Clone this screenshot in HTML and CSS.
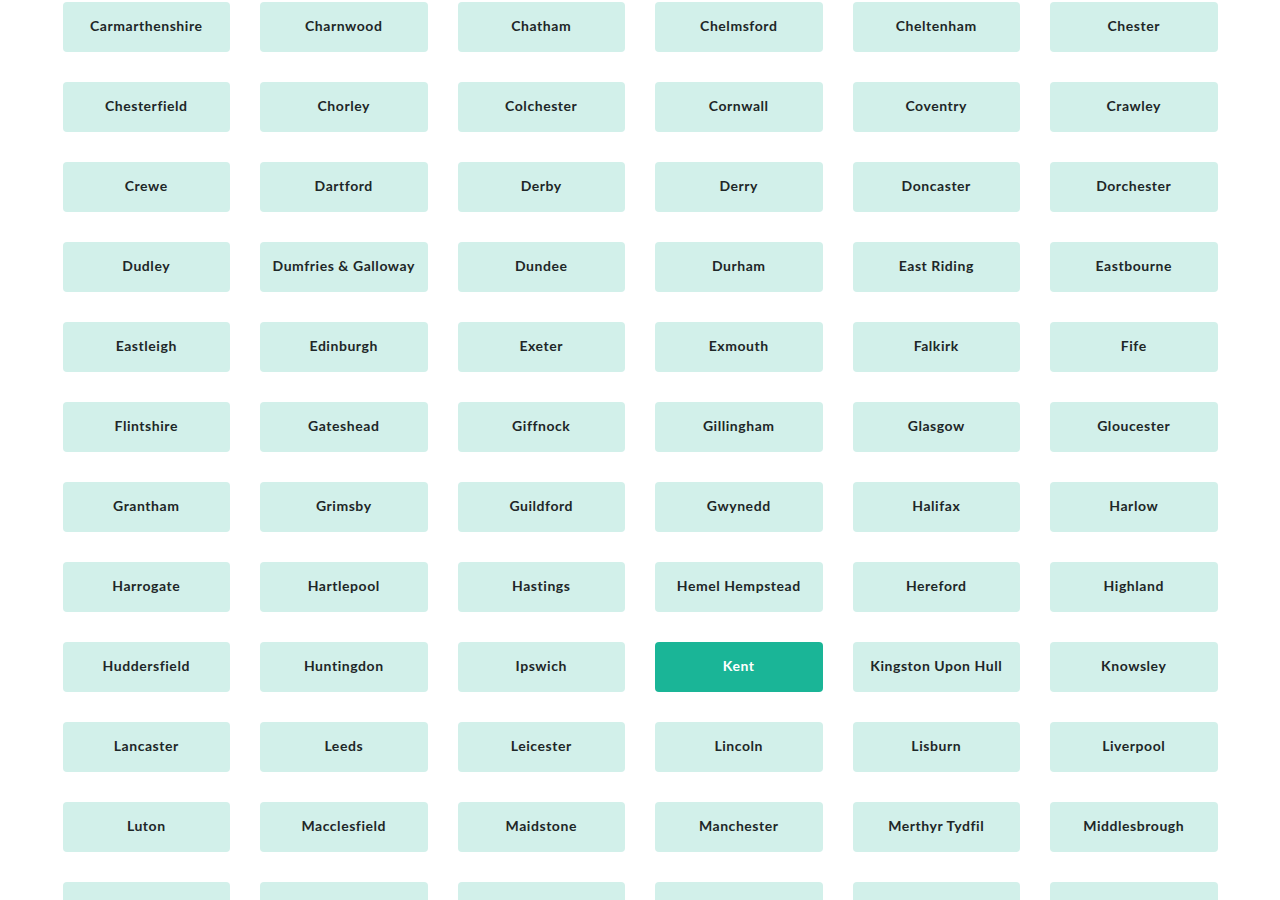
FILE: index.html
```html
<!DOCTYPE html>
<html lang="en">
<head>
<meta charset="utf-8">
<title>Locations</title>
<link rel="stylesheet" href="styles.css">
</head>
<body>
<main class="locations">
  <a class="loc">Carmarthenshire</a>
  <a class="loc">Charnwood</a>
  <a class="loc">Chatham</a>
  <a class="loc">Chelmsford</a>
  <a class="loc">Cheltenham</a>
  <a class="loc">Chester</a>
  <a class="loc">Chesterfield</a>
  <a class="loc">Chorley</a>
  <a class="loc">Colchester</a>
  <a class="loc">Cornwall</a>
  <a class="loc">Coventry</a>
  <a class="loc">Crawley</a>
  <a class="loc">Crewe</a>
  <a class="loc">Dartford</a>
  <a class="loc">Derby</a>
  <a class="loc">Derry</a>
  <a class="loc">Doncaster</a>
  <a class="loc">Dorchester</a>
  <a class="loc">Dudley</a>
  <a class="loc">Dumfries &amp; Galloway</a>
  <a class="loc">Dundee</a>
  <a class="loc">Durham</a>
  <a class="loc">East Riding</a>
  <a class="loc">Eastbourne</a>
  <a class="loc">Eastleigh</a>
  <a class="loc">Edinburgh</a>
  <a class="loc">Exeter</a>
  <a class="loc">Exmouth</a>
  <a class="loc">Falkirk</a>
  <a class="loc">Fife</a>
  <a class="loc">Flintshire</a>
  <a class="loc">Gateshead</a>
  <a class="loc">Giffnock</a>
  <a class="loc">Gillingham</a>
  <a class="loc">Glasgow</a>
  <a class="loc">Gloucester</a>
  <a class="loc">Grantham</a>
  <a class="loc">Grimsby</a>
  <a class="loc">Guildford</a>
  <a class="loc">Gwynedd</a>
  <a class="loc">Halifax</a>
  <a class="loc">Harlow</a>
  <a class="loc">Harrogate</a>
  <a class="loc">Hartlepool</a>
  <a class="loc">Hastings</a>
  <a class="loc">Hemel Hempstead</a>
  <a class="loc">Hereford</a>
  <a class="loc">Highland</a>
  <a class="loc">Huddersfield</a>
  <a class="loc">Huntingdon</a>
  <a class="loc">Ipswich</a>
  <a class="loc active">Kent</a>
  <a class="loc">Kingston Upon Hull</a>
  <a class="loc">Knowsley</a>
  <a class="loc">Lancaster</a>
  <a class="loc">Leeds</a>
  <a class="loc">Leicester</a>
  <a class="loc">Lincoln</a>
  <a class="loc">Lisburn</a>
  <a class="loc">Liverpool</a>
  <a class="loc">Luton</a>
  <a class="loc">Macclesfield</a>
  <a class="loc">Maidstone</a>
  <a class="loc">Manchester</a>
  <a class="loc">Merthyr Tydfil</a>
  <a class="loc">Middlesbrough</a>
  <a class="loc">Milton Keynes</a>
  <a class="loc">Monmouthshire</a>
  <a class="loc">Newcastle</a>
  <a class="loc">Newport</a>
  <a class="loc">Northampton</a>
  <a class="loc">Norwich</a>
</main>
</body>
</html>
```

FILE: styles.css
```css
html, body {
  margin: 0;
  padding: 0;
  background: #ffffff;
}

body {
  font-family: "Lato", "Liberation Sans", sans-serif;
}

/* six-column grid of location chips */
.locations {
  max-width: 1155px;
  margin: 0 auto;
  padding-top: 2px;
  display: grid;
  grid-template-columns: repeat(6, 1fr);
  grid-auto-rows: 50px;
  column-gap: 30px;
  row-gap: 30px;
}

.loc {
  display: flex;
  align-items: center;
  justify-content: center;
  padding-bottom: 3px;
  box-sizing: border-box;
  background: #d2f0ea;
  color: #1e2728;
  border-radius: 4px;
  font-size: 14px;
  font-weight: 700;
  letter-spacing: 0.55px;
  text-decoration: none;
  white-space: nowrap;
  cursor: pointer;
}

.loc.active {
  background: #1ab597;
  color: #ffffff;
}
```
